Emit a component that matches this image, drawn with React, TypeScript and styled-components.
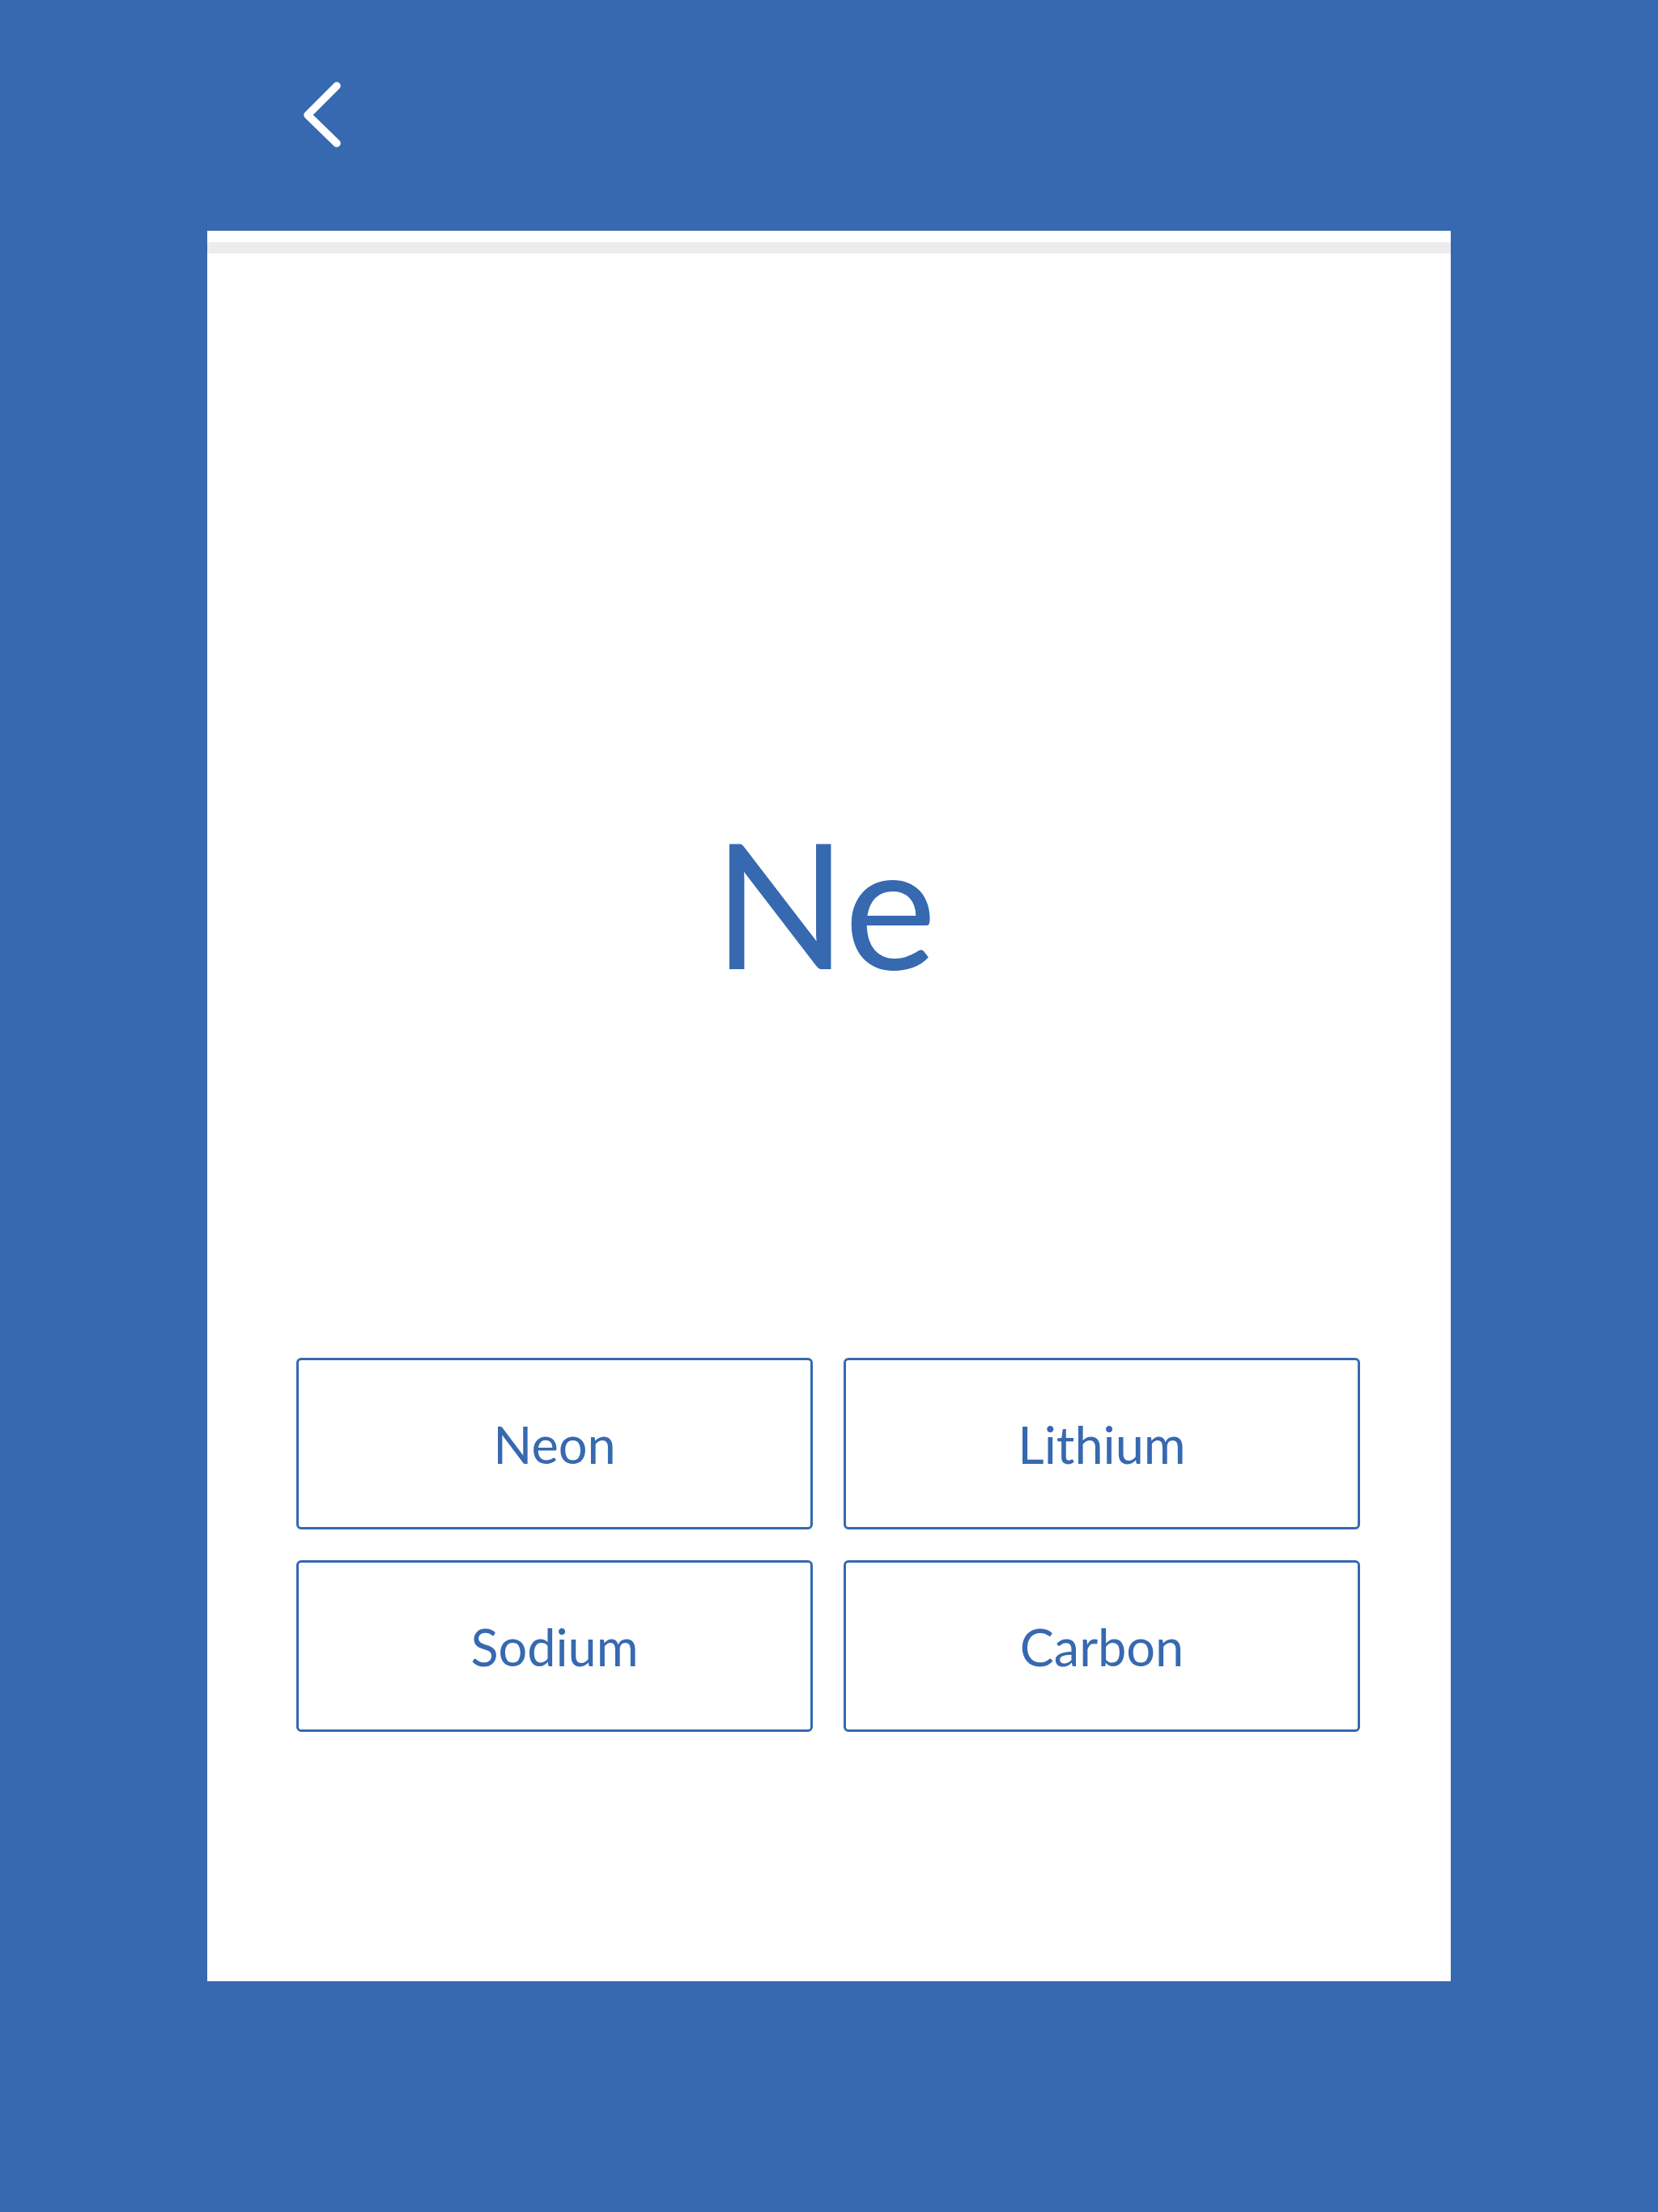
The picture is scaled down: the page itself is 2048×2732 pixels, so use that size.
import React from "react";
import styled, { createGlobalStyle } from "styled-components";

const BLUE = "#3669b0";

const Global = createGlobalStyle`
  html, body { margin: 0; padding: 0; background: ${BLUE}; }
  body { font-family: Lato, "Open Sans", sans-serif; }
  * { box-sizing: border-box; }
`;

const Page = styled.div`
  min-height: 2732px;
  background: ${BLUE};
  display: flex;
  flex-direction: column;
`;

const Header = styled.header`
  height: 285px;
  padding: 101px 0 0 374px;
`;

const BackButton = styled.button`
  display: block;
  width: 50px;
  height: 82px;
  padding: 0;
  border: none;
  background: transparent;
  cursor: pointer;
`;

const Card = styled.main`
  margin: 0 256px;
  height: 2162px;
  background: #ffffff;
  display: flex;
  flex-direction: column;
`;

const ProgressTrack = styled.div`
  margin-top: 14px;
  height: 14px;
  background: #ececec;
`;

const Symbol = styled.h1`
  margin: 693px 0 0;
  padding-right: 10px;
  font-family: Lato, sans-serif;
  font-weight: 400;
  font-size: 216px;
  line-height: 1;
  height: 218px;
  color: ${BLUE};
  text-align: center;
`;

const Options = styled.div`
  margin-top: 453px;
  padding: 0 112px 0 110px;
  display: grid;
  grid-template-columns: 1fr 1fr;
  gap: 38px;
`;

const Option = styled.button`
  height: 212px;
  border: 3px solid ${BLUE};
  border-radius: 6px;
  background: #ffffff;
  color: ${BLUE};
  font-family: Lato, sans-serif;
  font-size: 63px;
  font-weight: 400;
  line-height: 1;
  display: flex;
  align-items: center;
  justify-content: center;
  cursor: pointer;
`;

const options = ["Neon", "Lithium", "Sodium", "Carbon"];

export default function App() {
  return (
    <>
      <Global />
      <Page>
        <Header>
          <BackButton aria-label="Back">
            <svg width="50" height="82" viewBox="0 0 50 82" fill="none">
              <path
                d="M42 5 L6 41 L42 76"
                stroke="#ffffff"
                strokeWidth="9.5"
                strokeLinecap="round"
                strokeLinejoin="round"
              />
            </svg>
          </BackButton>
        </Header>
        <Card>
          <ProgressTrack />
          <Symbol>Ne</Symbol>
          <Options>
            {options.map((o) => (
              <Option key={o}>{o}</Option>
            ))}
          </Options>
        </Card>
      </Page>
    </>
  );
}
